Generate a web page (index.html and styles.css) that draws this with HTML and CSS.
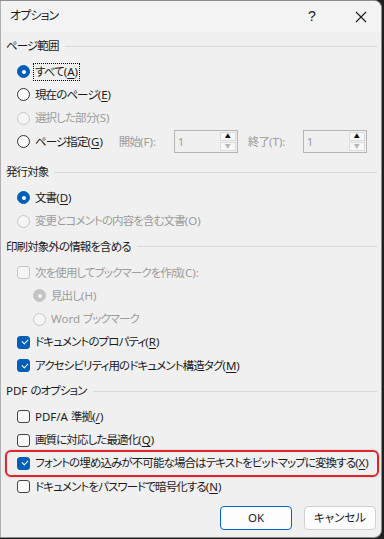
FILE: index.html
```html
<!DOCTYPE html>
<html lang="ja">
  <head>
    <meta charset="UTF-8" />
    <title>オプション</title>
    <link rel="stylesheet" href="styles.css">
  </head>
  <body>
    <div class="dialog">
      <div class="titlebar">
        <span class="title">オプション</span>
        <span class="help">?</span>
        <span class="close">
          <svg width="12" height="12" viewBox="0 0 12 12"><path d="M1 1 L11 11 M11 1 L1 11" stroke="#1b1b1b" stroke-width="1.1" fill="none"/></svg>
        </span>
      </div>

      <div class="content">
        <!-- ページ範囲 -->
        <div class="group group-range">
          <div class="group-head"><span>ページ範囲</span></div>
          <div class="row"><span class="radio on"></span><span class="label focus">すべて<span class="k">(<u>A</u>)</span></span></div>
          <div class="row"><span class="radio"></span><span class="label">現在のページ<span class="k">(<u>E</u>)</span></span></div>
          <div class="row off"><span class="radio"></span><span class="label">選択した部分<span class="k">(S)</span></span></div>
          <div class="row">
            <span class="radio"></span><span class="label">ページ指定<span class="k">(<u>G</u>)</span></span>
            <span class="spin-label first">開始<span class="k">(F):</span></span>
            <span class="spin"><span class="spin-val">1</span><span class="spin-btns"><span class="up">▲</span><span class="down">▼</span></span></span>
            <span class="spin-label">終了<span class="k">(T):</span></span>
            <span class="spin"><span class="spin-val">1</span><span class="spin-btns"><span class="up">▲</span><span class="down">▼</span></span></span>
          </div>
        </div>

        <!-- 発行対象 -->
        <div class="group">
          <div class="group-head"><span>発行対象</span></div>
          <div class="row"><span class="radio on"></span><span class="label">文書<span class="k">(<u>D</u>)</span></span></div>
          <div class="row off"><span class="radio"></span><span class="label">変更とコメントの内容を含む文書<span class="k">(O)</span></span></div>
        </div>

        <!-- 印刷対象外の情報を含める -->
        <div class="group">
          <div class="group-head"><span>印刷対象外の情報を含める</span></div>
          <div class="row off"><span class="check"></span><span class="label">次を使用してブックマークを作成<span class="k">(C):</span></span></div>
          <div class="row off sub"><span class="radio on"></span><span class="label">見出し<span class="k">(H)</span></span></div>
          <div class="row off sub"><span class="radio"></span><span class="label"><span class="k">Word </span>ブックマーク</span></div>
          <div class="row"><span class="check on"></span><span class="label">ドキュメントのプロパティ<span class="k">(<u>R</u>)</span></span></div>
          <div class="row"><span class="check on"></span><span class="label">アクセシビリティ用のドキュメント構造タグ<span class="k">(<u>M</u>)</span></span></div>
        </div>

        <!-- PDF のオプション -->
        <div class="group">
          <div class="group-head"><span><span class="k">PDF </span>のオプション</span></div>
          <div class="row"><span class="check"></span><span class="label"><span class="k">PDF/A </span>準拠<span class="k">(<u>/</u>)</span></span></div>
          <div class="row"><span class="check"></span><span class="label">画質に対応した最適化<span class="k">(<u>Q</u>)</span></span></div>
          <div class="row highlight"><span class="check on"></span><span class="label">フォントの埋め込みが不可能な場合はテキストをビットマップに変換する<span class="k">(<u>X</u>)</span></span></div>
          <div class="row"><span class="check"></span><span class="label">ドキュメントをパスワードで暗号化する<span class="k">(<u>N</u>)</span></span></div>
        </div>

        <div class="buttons">
          <button class="btn default"><span class="k">OK</span></button>
          <button class="btn">キャンセル</button>
        </div>
      </div>
    </div>
  </body>
</html>
```

FILE: styles.css
```css
html,
body {
  margin: 0;
  padding: 0;
}
body {
  width: 384px;
  height: 539px;
  background: #1f1f1f;
  color: #1b1b1b;
  font: normal 11.5px/1.2 "Noto Sans", "Noto Sans CJK JP", sans-serif;
  font-feature-settings: "palt";
  letter-spacing: -0.9px;
}
u {
  text-decoration-thickness: 1px;
  text-underline-offset: 2px;
}
/* latin runs keep normal spacing */
.k {
  letter-spacing: 0;
}

.dialog {
  width: 380px;
  height: 536px;
  background: #f0f0f0;
  border: 1px solid #8c8c8c;
  border-left-color: #b0b0b0;
  border-radius: 0 8px 8px 0;
  overflow: hidden;
  display: flex;
  flex-direction: column;
}

/* Title bar */
.titlebar {
  height: 31px;
  flex: none;
  background: #f3f3f3;
  display: flex;
  align-items: center;
  padding-left: 9px;
}
.title {
  flex: 1;
  margin-top: -1px;
  font-size: 12px;
}
.help {
  width: 16px;
  font: 14px "Liberation Sans", sans-serif;
  margin-right: 31px;
  margin-top: -1px;
}
.close {
  display: flex;
  margin-right: 14px;
}

/* Content */
.content {
  flex: 1;
  padding: 4px 4px 0 5px;
  display: flex;
  flex-direction: column;
}
.group {
  padding-bottom: 4px;
}
.group-range {
  padding-bottom: 9px;
}
.group-head {
  height: 20px;
  display: flex;
  align-items: center;
  margin-bottom: 4px;
  color: #1a1a1a;
}
.group-head::after {
  content: "";
  flex: 1;
  height: 1px;
  background: #d8d8d8;
  margin-left: 6px;
}

.row {
  height: 23.3px;
  display: flex;
  align-items: center;
  padding-left: 11px;
}
.row.sub {
  padding-left: 27px;
}
.row.off {
  color: #9c9c9c;
}
.label {
  margin-left: 4px;
  padding: 1px 1px;
  white-space: nowrap;
}
.label.focus {
  outline: 1px dotted #000;
  outline-offset: 0;
}

/* Radio */
.radio {
  width: 13px;
  height: 13px;
  box-sizing: border-box;
  border: 1px solid #333;
  border-radius: 50%;
  background: #fafafa;
  flex: none;
  position: relative;
}
.radio.on {
  background: #005fb8;
  border-color: #005fb8;
}
.radio.on::after {
  content: "";
  position: absolute;
  left: 3.5px;
  top: 3.5px;
  width: 4px;
  height: 4px;
  border-radius: 50%;
  background: #fff;
}
.off .radio {
  border-color: #c6c6c6;
  background: #f5f5f5;
}
.off .radio.on {
  background: #c4c4c4;
  border-color: #c4c4c4;
}
.off .radio.on::after {
  background: #f3f3f3;
}

/* Checkbox */
.check {
  width: 13px;
  height: 13px;
  box-sizing: border-box;
  border: 1px solid #444;
  border-radius: 3px;
  background: #fafafa;
  flex: none;
  position: relative;
}
.check.on {
  background: #005fb8;
  border-color: #005fb8;
}
.check.on::after {
  content: "";
  position: absolute;
  left: 3.5px;
  top: 2.5px;
  width: 5px;
  height: 3px;
  border-left: 1px solid #fff;
  border-bottom: 1px solid #fff;
  transform: rotate(-45deg);
}
.off .check {
  border-color: #c6c6c6;
  background: #f5f5f5;
}

/* Spin boxes */
.spin-label {
  color: #9c9c9c;
  width: 45px;
  margin-left: 10px;
  margin-right: 10px;
  white-space: nowrap;
}
.spin-label.first {
  margin-left: 15px;
}
.spin {
  width: 64px;
  height: 23px;
  box-sizing: border-box;
  border: 1px solid #b5b5b5;
  background: #f0f0f0;
  display: flex;
  letter-spacing: 0;
}
.spin-val {
  flex: 1;
  color: #9c9c9c;
  padding-left: 3px;
  line-height: 21px;
}
.spin-btns {
  width: 16px;
  display: flex;
  flex-direction: column;
  padding: 1px;
  gap: 1px;
}
.spin-btns span {
  flex: 1;
  display: flex;
  align-items: center;
  justify-content: center;
  font-size: 6px;
  border: 1px solid #dcdcdc;
  background: #f7f7f7;
}
.spin-btns .up {
  color: #111;
}
.spin-btns .down {
  color: #b8b8b8;
}

/* Highlight */
.row.highlight {
  height: 23px;
  margin: -2px -2px -2px -1px;
  padding-left: 10px;
  border: 2px solid #e0252d;
  border-radius: 6px;
  box-shadow: 0 0 2px rgba(0, 0, 0, 0.25);
}

/* Buttons */
.buttons {
  display: flex;
  justify-content: flex-end;
  gap: 12px;
  padding: 4px 1px 0 0;
}
.btn {
  width: 72px;
  height: 24px;
  font: inherit;
  color: #1b1b1b;
  background: #fdfdfd;
  border: 1px solid #d0d0d0;
  border-radius: 4px;
  padding: 0;
}
.btn.default {
  border-color: #0067c0;
}
```
